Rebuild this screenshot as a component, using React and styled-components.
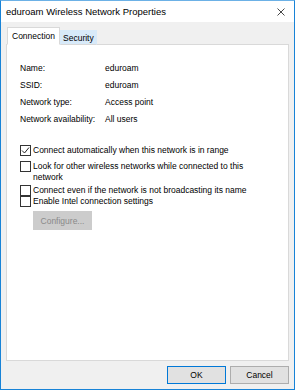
import React from "react";
import styled, { createGlobalStyle } from "styled-components";

const Global = createGlobalStyle`
  html, body { margin: 0; padding: 0; background: #ffffff; }
  body { font-family: "Liberation Sans", "Noto Sans", sans-serif; }
  * { box-sizing: border-box; }
`;

const Window = styled.div`
  width: 295px;
  height: 390px;
  display: flex;
  flex-direction: column;
  border: 1px solid #1883d7;
  border-top-color: #6cb1e6;
  background: #f0f0f0;
  color: #000;
  font-size: 8.5px;
`;

const TitleBar = styled.div`
  height: 21px;
  flex: none;
  background: #ffffff;
  display: flex;
  align-items: center;
  justify-content: space-between;
  padding: 0 9px 0 5px;
`;

const Title = styled.span`
  font-size: 9.5px;
  color: #000;
  white-space: nowrap;
`;

const Close = styled.span`
  width: 8px;
  height: 8px;
  display: flex;
  align-items: center;
  justify-content: center;
`;

const Body = styled.div`
  flex: 1;
  display: flex;
  flex-direction: column;
  padding: 5px;
`;

const TabStrip = styled.div`
  display: flex;
  align-items: flex-end;
  height: 18px;
  padding-left: 1px;
  position: relative;
  z-index: 1;
  margin-bottom: -1px;
`;

const Tab = styled.div`
  height: ${(p) => (p.$active ? "18px" : "15px")};
  padding: ${(p) => (p.$active ? "0 4px 1px" : "0 2px")};
  display: flex;
  align-items: center;
  white-space: nowrap;
  background: ${(p) => (p.$active ? "#ffffff" : "#d8eaf9")};
  border: 1px solid ${(p) => (p.$active ? "#d9d9d9" : "#d8eaf9")};
  border-bottom-color: ${(p) => (p.$active ? "#ffffff" : "#d9d9d9")};
`;

const Panel = styled.div`
  flex: 1;
  background: #ffffff;
  border: 1px solid #d9d9d9;
  padding: 17px 0 0 13px;
  display: flex;
  flex-direction: column;
`;

const InfoGrid = styled.div`
  display: grid;
  grid-template-columns: 85px auto;
  row-gap: 5px;
  line-height: 12px;
  white-space: nowrap;
`;

const Options = styled.div`
  margin-top: 20px;
  display: flex;
  flex-direction: column;
`;

const Option = styled.label`
  display: flex;
  align-items: flex-start;
  line-height: 11px;
  white-space: nowrap;
  margin-bottom: ${(p) => p.$gap || 0}px;
`;

const Box = styled.span`
  width: 11px;
  height: 11px;
  flex: none;
  border: 1px solid #333333;
  background: #ffffff;
  margin-right: 2px;
  display: flex;
  align-items: center;
  justify-content: center;
`;

const DisabledButton = styled.div`
  margin: 4px 0 0 13px;
  width: 59px;
  height: 19px;
  background: #cccccc;
  border: 1px solid #cccccc;
  color: #8a8a8a;
  display: flex;
  align-items: center;
  justify-content: center;
`;

const Footer = styled.div`
  display: flex;
  justify-content: flex-end;
  gap: 4px;
  padding-top: 5px;
`;

const Button = styled.div`
  width: 59px;
  height: 18px;
  display: flex;
  align-items: center;
  justify-content: center;
  background: #e1e1e1;
  border: 1px solid ${(p) => (p.$default ? "#0078d7" : "#adadad")};
`;

const Check = () => (
  <svg width="9" height="9" viewBox="0 0 9 9">
    <path d="M1 4.5 L3.5 7 L8 1.5" fill="none" stroke="#222" strokeWidth="1" />
  </svg>
);

export default function App() {
  return (
    <>
      <Global />
      <Window>
        <TitleBar>
          <Title>eduroam Wireless Network Properties</Title>
          <Close>
            <svg width="8" height="8" viewBox="0 0 8 8">
              <path d="M0.5 0.5 L7.5 7.5 M7.5 0.5 L0.5 7.5" stroke="#333" strokeWidth="0.9" />
            </svg>
          </Close>
        </TitleBar>
        <Body>
          <TabStrip>
            <Tab $active>Connection</Tab>
            <Tab>Security</Tab>
          </TabStrip>
          <Panel>
            <InfoGrid>
              <span>Name:</span>
              <span>eduroam</span>
              <span>SSID:</span>
              <span>eduroam</span>
              <span>Network type:</span>
              <span>Access point</span>
              <span>Network availability:</span>
              <span>All users</span>
            </InfoGrid>
            <Options>
              <Option $gap={5}>
                <Box><Check /></Box>
                <span>Connect automatically when this network is in range</span>
              </Option>
              <Option $gap={2}>
                <Box />
                <span>
                  Look for other wireless networks while connected to this
                  <br />
                  network
                </span>
              </Option>
              <Option>
                <Box />
                <span>Connect even if the network is not broadcasting its name</span>
              </Option>
              <Option>
                <Box />
                <span>Enable Intel connection settings</span>
              </Option>
            </Options>
            <DisabledButton>Configure...</DisabledButton>
          </Panel>
          <Footer>
            <Button $default>OK</Button>
            <Button>Cancel</Button>
          </Footer>
        </Body>
      </Window>
    </>
  );
}
